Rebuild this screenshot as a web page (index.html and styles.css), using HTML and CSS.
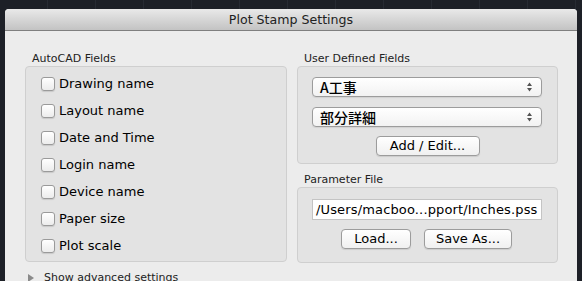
FILE: index.html
```html
<!DOCTYPE html>
<html>
<head>
<meta charset="utf-8">
<link rel="stylesheet" href="styles.css">
</head>
<body>
<div class="window">
  <div class="titlebar">Plot Stamp Settings</div>
  <div class="content">
    <div class="columns">
      <div class="col">
        <div class="label">AutoCAD Fields</div>
        <div class="group fields">
          <div class="row"><span class="cb"></span><span>Drawing name</span></div>
          <div class="row"><span class="cb"></span><span>Layout name</span></div>
          <div class="row"><span class="cb"></span><span>Date and Time</span></div>
          <div class="row"><span class="cb"></span><span>Login name</span></div>
          <div class="row"><span class="cb"></span><span>Device name</span></div>
          <div class="row"><span class="cb"></span><span>Paper size</span></div>
          <div class="row"><span class="cb"></span><span>Plot scale</span></div>
        </div>
      </div>
      <div class="col">
        <div class="label">User Defined Fields</div>
        <div class="group user">
          <div class="select"><span>A工事</span><svg class="arrows" width="7" height="10" viewBox="0 0 7 10"><path d="M3.5 0.5 L6 4 L1 4 Z M3.5 9.5 L6 6 L1 6 Z" fill="#555"/></svg></div>
          <div class="select"><span>部分詳細</span><svg class="arrows" width="7" height="10" viewBox="0 0 7 10"><path d="M3.5 0.5 L6 4 L1 4 Z M3.5 9.5 L6 6 L1 6 Z" fill="#555"/></svg></div>
          <div class="btnrow"><div class="btn addedit">Add / Edit...</div></div>
        </div>
        <div class="label param">Parameter File</div>
        <div class="group pfile">
          <div class="field">/Users/macboo...pport/Inches.pss</div>
          <div class="btnrow two"><div class="btn load">Load...</div><div class="btn saveas">Save As...</div></div>
        </div>
      </div>
    </div>
    <div class="advanced"><span class="tri"></span><span>Show advanced settings</span></div>
  </div>
</div>
</body>
</html>
```

FILE: styles.css
```css
html, body {
  margin: 0;
  padding: 0;
}
body {
  width: 582px;
  height: 281px;
  overflow: hidden;
  background: #1d2027;
  background-image: repeating-linear-gradient(90deg, transparent 0 47px, #272b33 47px 48px);
  font-family: "DejaVu Sans", "Noto Sans CJK JP", sans-serif;
  color: #000;
}
.window {
  margin: 9px 0 0 5px;
  width: 572px;
  height: 272px;
  background: #ececec;
  border-radius: 4px 4px 0 0;
  overflow: hidden;
}
.titlebar {
  height: 21px;
  line-height: 22px;
  text-align: center;
  font-size: 12.6px;
  color: #222;
  background: linear-gradient(#e9e9e9, #d2d2d2 60%, #c3c3c3);
  border-bottom: 1px solid #7f7f7f;
}
.content {
  padding: 21px 19px 0 20px;
}
.columns {
  display: flex;
  gap: 10px;
}
.col {
  width: 262px;
  display: flex;
  flex-direction: column;
}
.col + .col {
  width: 261px;
}
.label {
  font-size: 11px;
  line-height: 14px;
  color: #222;
  padding-left: 7px;
  margin-bottom: 0;
}
.group {
  background: #e3e3e3;
  border: 1px solid #cfcfcf;
  border-radius: 4px;
  box-sizing: border-box;
}
.fields {
  height: 196px;
  padding: 3px 0 0 15px;
}
.row {
  height: 27px;
  display: flex;
  align-items: center;
  gap: 4px;
  font-size: 13px;
}
.cb {
  width: 12px;
  height: 12px;
  border: 1px solid #9a9a9a;
  border-radius: 3px;
  background: linear-gradient(#ffffff, #ececec);
  box-shadow: 0 1px 1px rgba(0,0,0,0.12);
}
.user {
  height: 98px;
  padding: 10px 15px 0 14px;
  display: flex;
  flex-direction: column;
  gap: 10px;
}
.select {
  height: 20px;
  box-sizing: border-box;
  border: 1px solid #9c9c9c;
  border-radius: 4px;
  background: linear-gradient(#ffffff, #f2f2f2);
  display: flex;
  align-items: center;
  justify-content: space-between;
  padding: 0 8px 0 7px;
  font-size: 14px;
  font-weight: 500;
  font-family: "Noto Sans CJK JP", "DejaVu Sans", sans-serif;
  box-shadow: 0 1px 1px rgba(0,0,0,0.08);
}
.btnrow {
  display: flex;
  justify-content: center;
  gap: 13px;
}
.user .btnrow {
  padding-left: 1px;
  margin-top: -1px;
}
.btn {
  height: 20px;
  box-sizing: border-box;
  border: 1px solid #9c9c9c;
  border-radius: 4px;
  background: linear-gradient(#ffffff, #f0f0f0);
  font-size: 13px;
  line-height: 18px;
  text-align: center;
  box-shadow: 0 1px 1px rgba(0,0,0,0.1);
}
.addedit { width: 104px; }
.load { width: 70px; }
.saveas { width: 88px; }
.param {
  margin-top: 9px;
}
.pfile {
  height: 76px;
  padding: 11px 15px 0 14px;
}
.field {
  height: 21px;
  box-sizing: border-box;
  background: #fff;
  border: 1px solid #c4c4c4;
  font-size: 13px;
  letter-spacing: 0.15px;
  line-height: 19px;
  padding-left: 3px;
  white-space: nowrap;
  overflow: hidden;
}
.pfile .btnrow {
  margin-top: 9px;
  padding-right: 1px;
}
.advanced {
  display: flex;
  align-items: center;
  gap: 10px;
  margin-top: 8px;
  padding-left: 3px;
  font-size: 11px;
  line-height: 13px;
  color: #222;
}
.tri {
  width: 0;
  height: 0;
  border-left: 6px solid #8a8a8a;
  border-top: 4px solid transparent;
  border-bottom: 4px solid transparent;
}
```
